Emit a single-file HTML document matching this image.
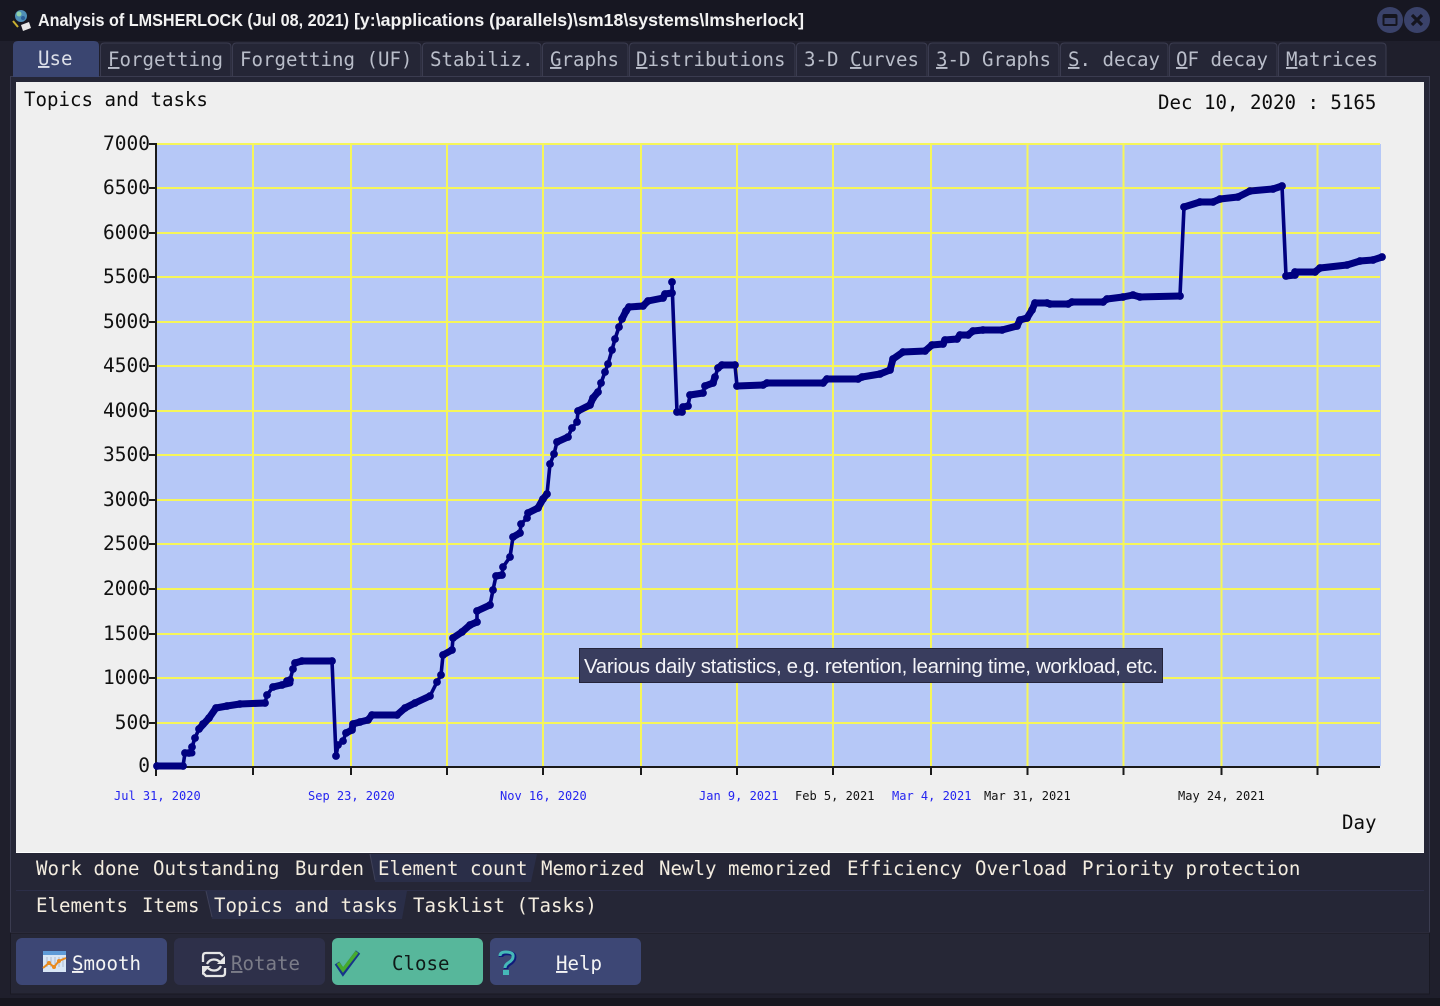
<!DOCTYPE html>
<html><head><meta charset="utf-8"><title>Analysis</title>
<style>
html,body{margin:0;padding:0;background:#16161f;width:1440px;height:1006px;overflow:hidden}
svg{display:block}
text{font-family:"DejaVu Sans Mono","Liberation Mono",monospace;font-size:19.1px;white-space:pre}
.t{fill:#b9bdc9}
.b{fill:#f3ecdf}
.k{fill:#0b0b0b}
.y{text-anchor:end;fill:#111;font-size:19.500px}
.x{font-size:12px;fill:#111}
.xb{font-size:12px;fill:#2424f0}
</style></head><body>
<svg width="1440" height="1006" viewBox="0 0 1440 1006" xmlns="http://www.w3.org/2000/svg">
<defs><marker id="d" markerUnits="userSpaceOnUse" markerWidth="10" markerHeight="10" refX="5" refY="5"><circle cx="5" cy="5" r="3.900" fill="#000080"/></marker></defs>
<rect width="1440" height="1006" fill="#16161f"/>
<path d="M0 0H5L0 4Z M1440 0H1434L1440 5Z M0 1006V999L5 1006Z M1440 1006V999L1435 1006Z" fill="#e8e8e8"/>
<rect x="0" y="40" width="1440" height="960" fill="#1f1f2c"/>
<rect x="0" y="998" width="1440" height="8" fill="#16161f"/>
<rect x="0" y="0" width="1440" height="41" fill="#171722"/>
<!-- frame -->
<rect x="10.5" y="76.5" width="1419" height="856" fill="#252636" stroke="#3b3c50"/>
<rect x="10.5" y="933" width="1419" height="61" fill="#262736" stroke="#191923"/>
<!-- title -->
<g transform="translate(12,8)">
<circle cx="9" cy="8" r="6" fill="#4f8fb8"/><circle cx="7" cy="6" r="2.500" fill="#8fd0a8"/><circle cx="11" cy="10" r="2" fill="#2b5f9a"/>
<path d="M1 13L6 19" stroke="#c8b030" stroke-width="2"/><path d="M9 17L17 14L19 20L11 23Z" fill="#e8e8e8"/>
</g>
<text x="38" y="26" textLength="311" lengthAdjust="spacingAndGlyphs" style="font-family:'Liberation Sans',sans-serif;font-weight:700;font-size:17.500px;fill:#f2f2f2">Analysis of LMSHERLOCK (Jul 08, 2021)</text>
<text x="354" y="26" textLength="450" lengthAdjust="spacingAndGlyphs" style="font-family:'Liberation Sans',sans-serif;font-weight:700;font-size:17.500px;fill:#f2f2f2">[y:\applications (parallels)\sm18\systems\lmsherlock]</text>
<circle cx="1390" cy="20" r="13" fill="#3a426a"/>
<circle cx="1417" cy="20" r="13" fill="#3a426a"/>
<rect x="1383.500" y="15" width="13" height="10" rx="1" fill="none" stroke="#15151f" stroke-width="2"/><rect x="1383" y="15" width="14" height="3" fill="#15151f"/>
<path d="M1412 15L1422 25M1422 15L1412 25" stroke="#15151f" stroke-width="3.200"/>
<!-- tabs -->
<g fill="#252636" stroke="#3b3c50">
<path d="M100.500 76V47q0-4 4-4H227q4 0 4 4V76"/>
<path d="M232.500 76V47q0-4 4-4H417q4 0 4 4V76"/>
<path d="M422.500 76V47q0-4 4-4H537q4 0 4 4V76"/>
<path d="M542.500 76V47q0-4 4-4H624q4 0 4 4V76"/>
<path d="M629.500 76V47q0-4 4-4H791q4 0 4 4V76"/>
<path d="M796.500 76V47q0-4 4-4H923q4 0 4 4V76"/>
<path d="M928.500 76V47q0-4 4-4H1055q4 0 4 4V76"/>
<path d="M1060.500 76V47q0-4 4-4H1164q4 0 4 4V76"/>
<path d="M1169.500 76V47q0-4 4-4H1273q4 0 4 4V76"/>
<path d="M1278.500 76V47q0-4 4-4H1382q4 0 4 4V76"/>
</g>
<path d="M13 77V46q0-5 5-5H94q5 0 5 5V77Z" fill="#3a4570"/>
<text x="38" y="65" style="fill:#dcdfe8"><tspan text-decoration="underline">U</tspan>se</text>
<text x="108" y="66" class="t"><tspan text-decoration="underline">F</tspan>orgetting</text>
<text x="240" y="66" class="t">Forgetting (UF)</text>
<text x="430" y="66" class="t">Stabiliz.</text>
<text x="550" y="66" class="t"><tspan text-decoration="underline">G</tspan>raphs</text>
<text x="636" y="66" class="t"><tspan text-decoration="underline">D</tspan>istributions</text>
<text x="804" y="66" class="t">3-D <tspan text-decoration="underline">C</tspan>urves</text>
<text x="936" y="66" class="t"><tspan text-decoration="underline">3</tspan>-D Graphs</text>
<text x="1068" y="66" class="t"><tspan text-decoration="underline">S</tspan>. decay</text>
<text x="1176" y="66" class="t"><tspan text-decoration="underline">O</tspan>F decay</text>
<text x="1286" y="66" class="t"><tspan text-decoration="underline">M</tspan>atrices</text>
<!-- content -->
<rect x="16" y="82" width="1408" height="771" fill="#fff"/>
<rect x="16" y="82" width="1408" height="770" fill="#efefef"/>
<text x="24" y="106" class="k">Topics and tasks</text>
<text x="1158" y="109" class="k">Dec 10, 2020 : 5165</text>
<!-- plot -->
<rect x="157" y="144" width="1224" height="622" fill="#b6c8f7"/>
<g stroke="#f6f65a" stroke-width="2" fill="none">
<path d="M253 144V766M351 144V766M447 144V766M543 144V766M641 144V766M737 144V766M833 144V766M931 144V766M1027.500 144V766M1123.500 144V766M1221.500 144V766M1317.500 144V766"/>
<path d="M157 144H1380M157 188H1380M157 233H1380M157 277H1380M157 322H1380M157 366H1380M157 411H1380M157 455H1380M157 500H1380M157 544H1380M157 589H1380M157 634H1380M157 678H1380M157 723H1380"/>
</g>
<g stroke="#1a1a1a" stroke-width="2" fill="none">
<path d="M156 143V776M155 767H1380"/>
<path d="M149 144H156M149 188H156M149 233H156M149 277H156M149 322H156M149 366H156M149 411H156M149 455H156M149 500H156M149 544H156M149 589H156M149 634H156M149 678H156M149 723H156"/>
<path d="M253 767V775M351 767V775M447 767V775M543 767V775M641 767V775M737 767V775M833 767V775M931 767V775M1027.500 767V775M1123.500 767V775M1221.500 767V775M1317.500 767V775"/>
</g>
<g>
<text x="150" y="150" class="y">7000</text>
<text x="150" y="194" class="y">6500</text>
<text x="150" y="239" class="y">6000</text>
<text x="150" y="283" class="y">5500</text>
<text x="150" y="328" class="y">5000</text>
<text x="150" y="372" class="y">4500</text>
<text x="150" y="417" class="y">4000</text>
<text x="150" y="461" class="y">3500</text>
<text x="150" y="506" class="y">3000</text>
<text x="150" y="550" class="y">2500</text>
<text x="150" y="595" class="y">2000</text>
<text x="150" y="640" class="y">1500</text>
<text x="150" y="684" class="y">1000</text>
<text x="150" y="729" class="y">500</text>
<text x="150" y="772" class="y">0</text>
</g>
<text x="114" y="800" class="xb">Jul 31, 2020</text>
<text x="308" y="800" class="xb">Sep 23, 2020</text>
<text x="500" y="800" class="xb">Nov 16, 2020</text>
<text x="699" y="800" class="xb">Jan 9, 2021</text>
<text x="795" y="800" class="x">Feb 5, 2021</text>
<text x="892" y="800" class="xb">Mar 4, 2021</text>
<text x="984" y="800" class="x">Mar 31, 2021</text>
<text x="1178" y="800" class="x">May 24, 2021</text>
<text x="1342" y="829" class="k">Day</text>
<!-- series -->
<polyline fill="none" stroke="#000080" stroke-width="3.600" stroke-linejoin="round" marker-start="url(#d)" marker-mid="url(#d)" marker-end="url(#d)" points="157,766 183,766 185,753 189,753 192,747 195,738 199,729 203,724 209,718 216,708 227,706 240,704 265,703 267,695 273,687 282,685 287,681 290,680 293,669 295,663 302,661 332,661 336,756 338,745 343,741 346,733 352,730 353,724 360,722 368,720 372,715 397,715 405,708 415,703 430,696 437,682 441,675 443,655 452,650 453,638 462,632 470,625 477,622 477,611 490,605 493,590 496,576 502,575 503,567 510,557 513,537 520,533 521,524 527,518 528,513 538,508 543,499 547,494 550,464 554,454 557,442 568,437 572,428 577,422 578,411 590,405 593,398 598,392 601,383 605,372 608,364 612,350 615,339 619,327 622,319 626,311 629,307 643,306 648,301 663,298 665,294 672,293 672,282 677,412 682,412 683,407 688,406 690,395 703,393 705,386 713,383 715,377 718,368 722,365 735,365 737,386 763,385 767,383 823,383 827,379 858,379 862,377 880,374 890,370 893,359 903,352 925,351 932,345 943,344 945,340 957,339 960,335 968,335 973,331 983,330 1002,330 1017,326 1020,320 1027,318 1032,310 1035,303 1047,303 1050,304 1068,304 1072,302 1103,302 1107,299 1123,297 1133,295 1140,297 1180,296 1184,207 1200,202 1213,202 1220,199 1238,197 1250,191 1273,189 1282,186 1286,276 1295,275 1295,272 1315,272 1320,268 1347,265 1360,261 1373,260 1382,257"/>
<g fill="none" stroke="#000080" stroke-width="7" stroke-linecap="round" stroke-linejoin="round">
<polyline points="157,766 183,766"/>
<polyline points="185,753 192,753"/>
<polyline points="199,729 209,718 216,708 227,706 240,704 265,703"/>
<polyline points="273,687 290,683"/>
<polyline points="295,663 302,661 332,661"/>
<polyline points="346,733 352,730 353,724 360,722 368,720 372,715 397,715 405,708 415,703 430,696"/>
<polyline points="443,655 452,650"/>
<polyline points="453,638 462,632 470,625 477,622"/>
<polyline points="477,611 490,605"/>
<polyline points="496,576 502,575"/>
<polyline points="513,537 520,533"/>
<polyline points="528,513 538,508 543,499 547,494"/>
<polyline points="557,442 568,437"/>
<polyline points="578,411 590,405 593,398 598,392"/>
<polyline points="622,319 626,311 629,307 643,306 648,301 663,298 665,294 672,293"/>
<polyline points="677,412 682,412"/>
<polyline points="683,407 688,406"/>
<polyline points="690,395 703,393"/>
<polyline points="705,386 713,383 715,377"/>
<polyline points="718,368 722,365 735,365"/>
<polyline points="737,386 763,385 767,383 823,383 827,379 858,379 862,377 880,374 890,370 893,359 903,352 925,351 932,345 943,344 945,340 957,339 960,335 968,335 973,331 983,330 1002,330 1017,326 1020,320 1027,318 1032,310 1035,303 1047,303 1050,304 1068,304 1072,302 1103,302 1107,299 1123,297 1133,295 1140,297 1180,296"/>
<polyline points="1184,207 1200,202 1213,202 1220,199 1238,197 1250,191 1273,189 1282,186"/>
<polyline points="1286,276 1295,275 1295,272 1315,272 1320,268 1347,265 1360,261 1373,260 1382,257"/>
</g>
<!-- tooltip -->
<rect x="579.500" y="648.500" width="583" height="34" fill="#393d5e" stroke="#24243a"/>
<text x="584" y="673" textLength="574" lengthAdjust="spacing" style="font-family:'Liberation Sans',sans-serif;font-size:20.500px;fill:#f4f4f8">Various daily statistics, e.g. retention, learning time, workload, etc.</text>
<!-- bottom tabs -->
<path d="M370 854L375 882H531L537 854Z" fill="#2a2e48"/>
<path d="M206 891L212 919H402L407 891Z" fill="#2a2e48"/>
<path d="M370 854L375 880" stroke="#3f4158" fill="none"/>
<path d="M206 891L212 917" stroke="#3f4158" fill="none"/>
<path d="M16 890.500H1424" stroke="#2c2e48"/>
<text x="36" y="875" class="b">Work done</text>
<text x="153" y="875" class="b">Outstanding</text>
<text x="295" y="875" class="b">Burden</text>
<text x="378" y="875" class="b">Element count</text>
<text x="541" y="875" class="b">Memorized</text>
<text x="659" y="875" class="b">Newly memorized</text>
<text x="847" y="875" class="b">Efficiency</text>
<text x="975" y="875" class="b">Overload</text>
<text x="1082" y="875" class="b">Priority protection</text>
<text x="36" y="912" class="b">Elements</text>
<text x="142" y="912" class="b">Items</text>
<text x="214" y="912" class="b">Topics and tasks</text>
<text x="413" y="912" class="b">Tasklist (Tasks)</text>
<!-- buttons -->
<rect x="16" y="938" width="151" height="47" rx="6" fill="#3d4775"/>
<rect x="174" y="938" width="151" height="47" rx="6" fill="#2e304a"/>
<rect x="332" y="938" width="151" height="47" rx="6" fill="#57b79b"/>
<rect x="490" y="938" width="151" height="47" rx="6" fill="#3d4775"/>
<!-- smooth icon -->
<rect x="43" y="951" width="23" height="21" fill="#d9e6f5"/>
<rect x="43" y="951" width="23" height="4" fill="#5f9bd8"/>
<path d="M47 957V967M51 957V967M55 957V967M59 957V967M63 957V967" stroke="#aebbd0"/>
<path d="M43 968L49 963L54 967L59 961L66 958" stroke="#e98a1e" stroke-width="2" fill="none"/>
<circle cx="49" cy="963" r="2" fill="#e98a1e"/><circle cx="54" cy="967" r="2" fill="#e98a1e"/><circle cx="59" cy="961" r="2" fill="#e98a1e"/>
<text x="72" y="970" style="fill:#f4f4f4"><tspan text-decoration="underline">S</tspan>mooth</text>
<!-- rotate icon -->
<g fill="none" stroke="#e6e6e6" stroke-width="2.300">
<path d="M203 962V956q0-3 3-3H220l3 3"/>
<path d="M225 968V973q0 3-3 3H206l-3-3"/>
<path d="M207 964q3-6 10-4l5 3M221 966q-3 6-10 4l-5-3"/>
</g>
<path d="M225 956V964H217Z M202 975V966H210Z" fill="#e6e6e6"/>
<text x="231" y="970" style="fill:#7b7c88"><tspan text-decoration="underline">R</tspan>otate</text>
<!-- check icon -->
<path d="M337 963L343 972L358 952" fill="none" stroke="#16348a" stroke-width="5.500"/>
<path d="M338 963L343 970L357 952" fill="none" stroke="#46ab2e" stroke-width="3.500"/>
<text x="392" y="970" style="fill:#0f1a18">Close</text>
<!-- help icon -->
<path d="M501 957q0-4 6-4q8 0 7 5q0 3-5 6q-3 2-3 5" fill="none" stroke="#0f1a7a" stroke-width="4.500"/>
<path d="M500 956q0-4 6-4q8 0 7 5q0 3-5 6q-3 2-3 5" fill="none" stroke="#45b8b8" stroke-width="3"/>
<rect x="503" y="970" width="6" height="5" fill="#45b8b8"/>
<text x="556" y="970" style="fill:#f4f4f4"><tspan text-decoration="underline">H</tspan>elp</text>
</svg>
</body></html>
